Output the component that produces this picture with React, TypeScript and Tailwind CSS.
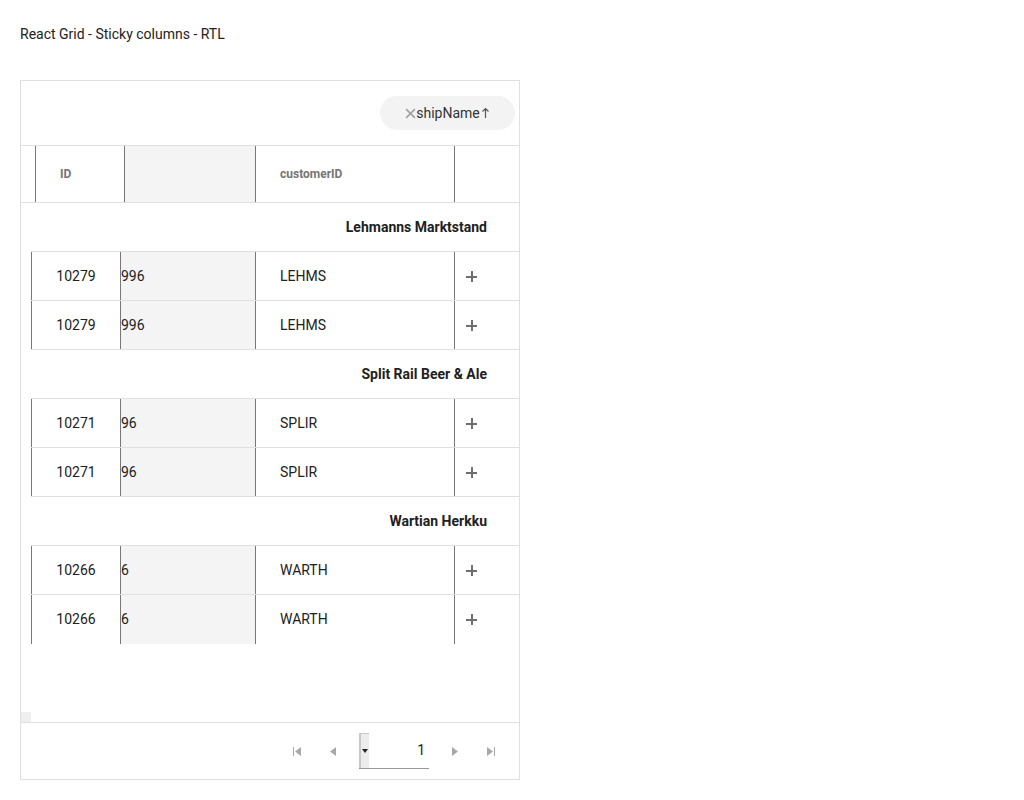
const font = { fontFamily: "Roboto, 'Liberation Sans', sans-serif" };

type Row = { id: string; clipped: string; customer: string };
type Group = { name: string; rows: Row[] };

const groups: Group[] = [
  {
    name: "Lehmanns Marktstand",
    rows: [
      { id: "10279", clipped: "996", customer: "LEHMS" },
      { id: "10279", clipped: "996", customer: "LEHMS" },
    ],
  },
  {
    name: "Split Rail Beer & Ale",
    rows: [
      { id: "10271", clipped: "96", customer: "SPLIR" },
      { id: "10271", clipped: "96", customer: "SPLIR" },
    ],
  },
  {
    name: "Wartian Herkku",
    rows: [
      { id: "10266", clipped: "6", customer: "WARTH" },
      { id: "10266", clipped: "6", customer: "WARTH" },
    ],
  },
];

function Tri({ dir }: { dir: "l" | "r" }) {
  return (
    <svg width="6" height="9" viewBox="0 0 6 9" className="fill-[#a8a8a8]">
      {dir === "l" ? <path d="M6 0 L0 4.5 L6 9 Z" /> : <path d="M0 0 L6 4.5 L0 9 Z" />}
    </svg>
  );
}

function DataRow({ row, last }: { row: Row; last: boolean }) {
  return (
    <div className={`flex h-[49px] ${last ? "" : "border-b border-[#e0e0e0]"}`}>
      <div className="flex w-[89px] shrink-0 items-center justify-center border-l border-[#777] text-[14px] text-[#212121]">
        {row.id}
      </div>
      <div className="flex w-[135px] shrink-0 items-center overflow-hidden border-l border-[#777] bg-[#f4f4f4] text-[14px] text-[#212121]">
        {row.clipped}
      </div>
      <div className="flex w-[199px] shrink-0 items-center border-l border-[#777] pl-[24px] text-[14px] text-[#212121]">
        {row.customer}
      </div>
      <div className="flex flex-1 items-center border-l border-[#777] pl-[11px]">
        <svg width="11" height="11" viewBox="0 0 11 11" className="fill-[#6e6e6e]" shapeRendering="crispEdges">
          <path d="M4.5 0 H6.5 V4.5 H11 V6.5 H6.5 V11 H4.5 V6.5 H0 V4.5 H4.5 Z" />
        </svg>
      </div>
    </div>
  );
}

export default function App() {
  return (
    <div className="min-h-[800px] bg-white px-[20px] pt-[24px]" style={font}>
      <div className="h-[20px] text-[14px] leading-[20px] text-[#222]">React Grid - Sticky columns - RTL</div>

      {/* ════════════ Grid ════════════ */}
      <div className="mt-[36px] flex h-[700px] w-[500px] flex-col border border-[#e0e0e0]">
        {/* toolbar with grouping chip */}
        <div className="flex h-[65px] shrink-0 items-center justify-end border-b border-[#e0e0e0] pr-[4px]">
          <div className="flex h-[34px] w-[135px] items-center justify-center rounded-full bg-[#f3f3f3] text-[14px] text-[#333]">
            <svg width="11" height="11" viewBox="0 0 10 10" className="stroke-[#a0a0a0]" strokeWidth="1.4">
              <path d="M1 1 L9 9 M9 1 L1 9" />
            </svg>
            <span>shipName</span>
            <svg width="9" height="12" viewBox="0 0 9 12" className="ml-[1px] stroke-[#555]" strokeWidth="1.2" fill="none">
              <path d="M4.5 11 V1.5 M1.5 4.5 L4.5 1.5 L7.5 4.5" />
            </svg>
          </div>
        </div>

        {/* header */}
        <div className="flex h-[57px] shrink-0 border-b border-[#e0e0e0]">
          <div className="w-[14px] shrink-0" />
          <div className="flex w-[89px] shrink-0 items-center border-l border-[#777] pl-[24px] text-[12px] font-bold text-[#757575]">
            ID
          </div>
          <div className="w-[131px] shrink-0 border-l border-[#777] bg-[#f4f4f4]" />
          <div className="flex w-[199px] shrink-0 items-center border-l border-[#777] pl-[24px] text-[12px] font-bold text-[#757575]">
            customerID
          </div>
          <div className="flex-1 border-l border-[#777]" />
        </div>

        {/* body */}
        <div className="flex flex-1 flex-col">
          <div className="ml-[10px]">
            {groups.map((g, gi) => (
              <div key={g.name}>
                <div className="flex h-[49px] items-center justify-end border-b border-[#e0e0e0] pr-[32px] text-[14px] font-bold text-[#212121]">
                  {g.name}
                </div>
                {g.rows.map((r, ri) => (
                  <DataRow key={ri} row={r} last={gi === groups.length - 1 && ri === g.rows.length - 1} />
                ))}
              </div>
            ))}
          </div>
          <div className="flex-1" />
          <div className="h-[10px] w-[10px] bg-[#efefef]" />
        </div>

        {/* pager */}
        <div className="flex h-[57px] shrink-0 items-center justify-end border-t border-[#e0e0e0] pr-[10px]">
          <div className="flex w-[36px] items-center justify-center gap-[1px]">
            <span className="h-[9px] w-[1px] bg-[#a8a8a8]" />
            <Tri dir="l" />
          </div>
          <div className="flex w-[36px] items-center justify-center">
            <Tri dir="l" />
          </div>
          <div className="mx-[8px] flex h-[36px] w-[70px] items-end border-b border-[#999]">
            <div className="flex h-[35px] w-[10px] items-center justify-center border-l-2 border-t border-[#c8c8c8] bg-[#ececec]">
              <svg width="6" height="4" viewBox="0 0 6 4" className="fill-[#222]">
                <path d="M0 0 H6 L3 4 Z" />
              </svg>
            </div>
            <div className="flex h-[35px] flex-1 items-center justify-end pr-[4px] text-[14px] text-[#212121]">1</div>
          </div>
          <div className="flex w-[36px] items-center justify-center">
            <Tri dir="r" />
          </div>
          <div className="flex w-[36px] items-center justify-center gap-[1px]">
            <Tri dir="r" />
            <span className="h-[9px] w-[1px] bg-[#a8a8a8]" />
          </div>
        </div>
      </div>
    </div>
  );
}
